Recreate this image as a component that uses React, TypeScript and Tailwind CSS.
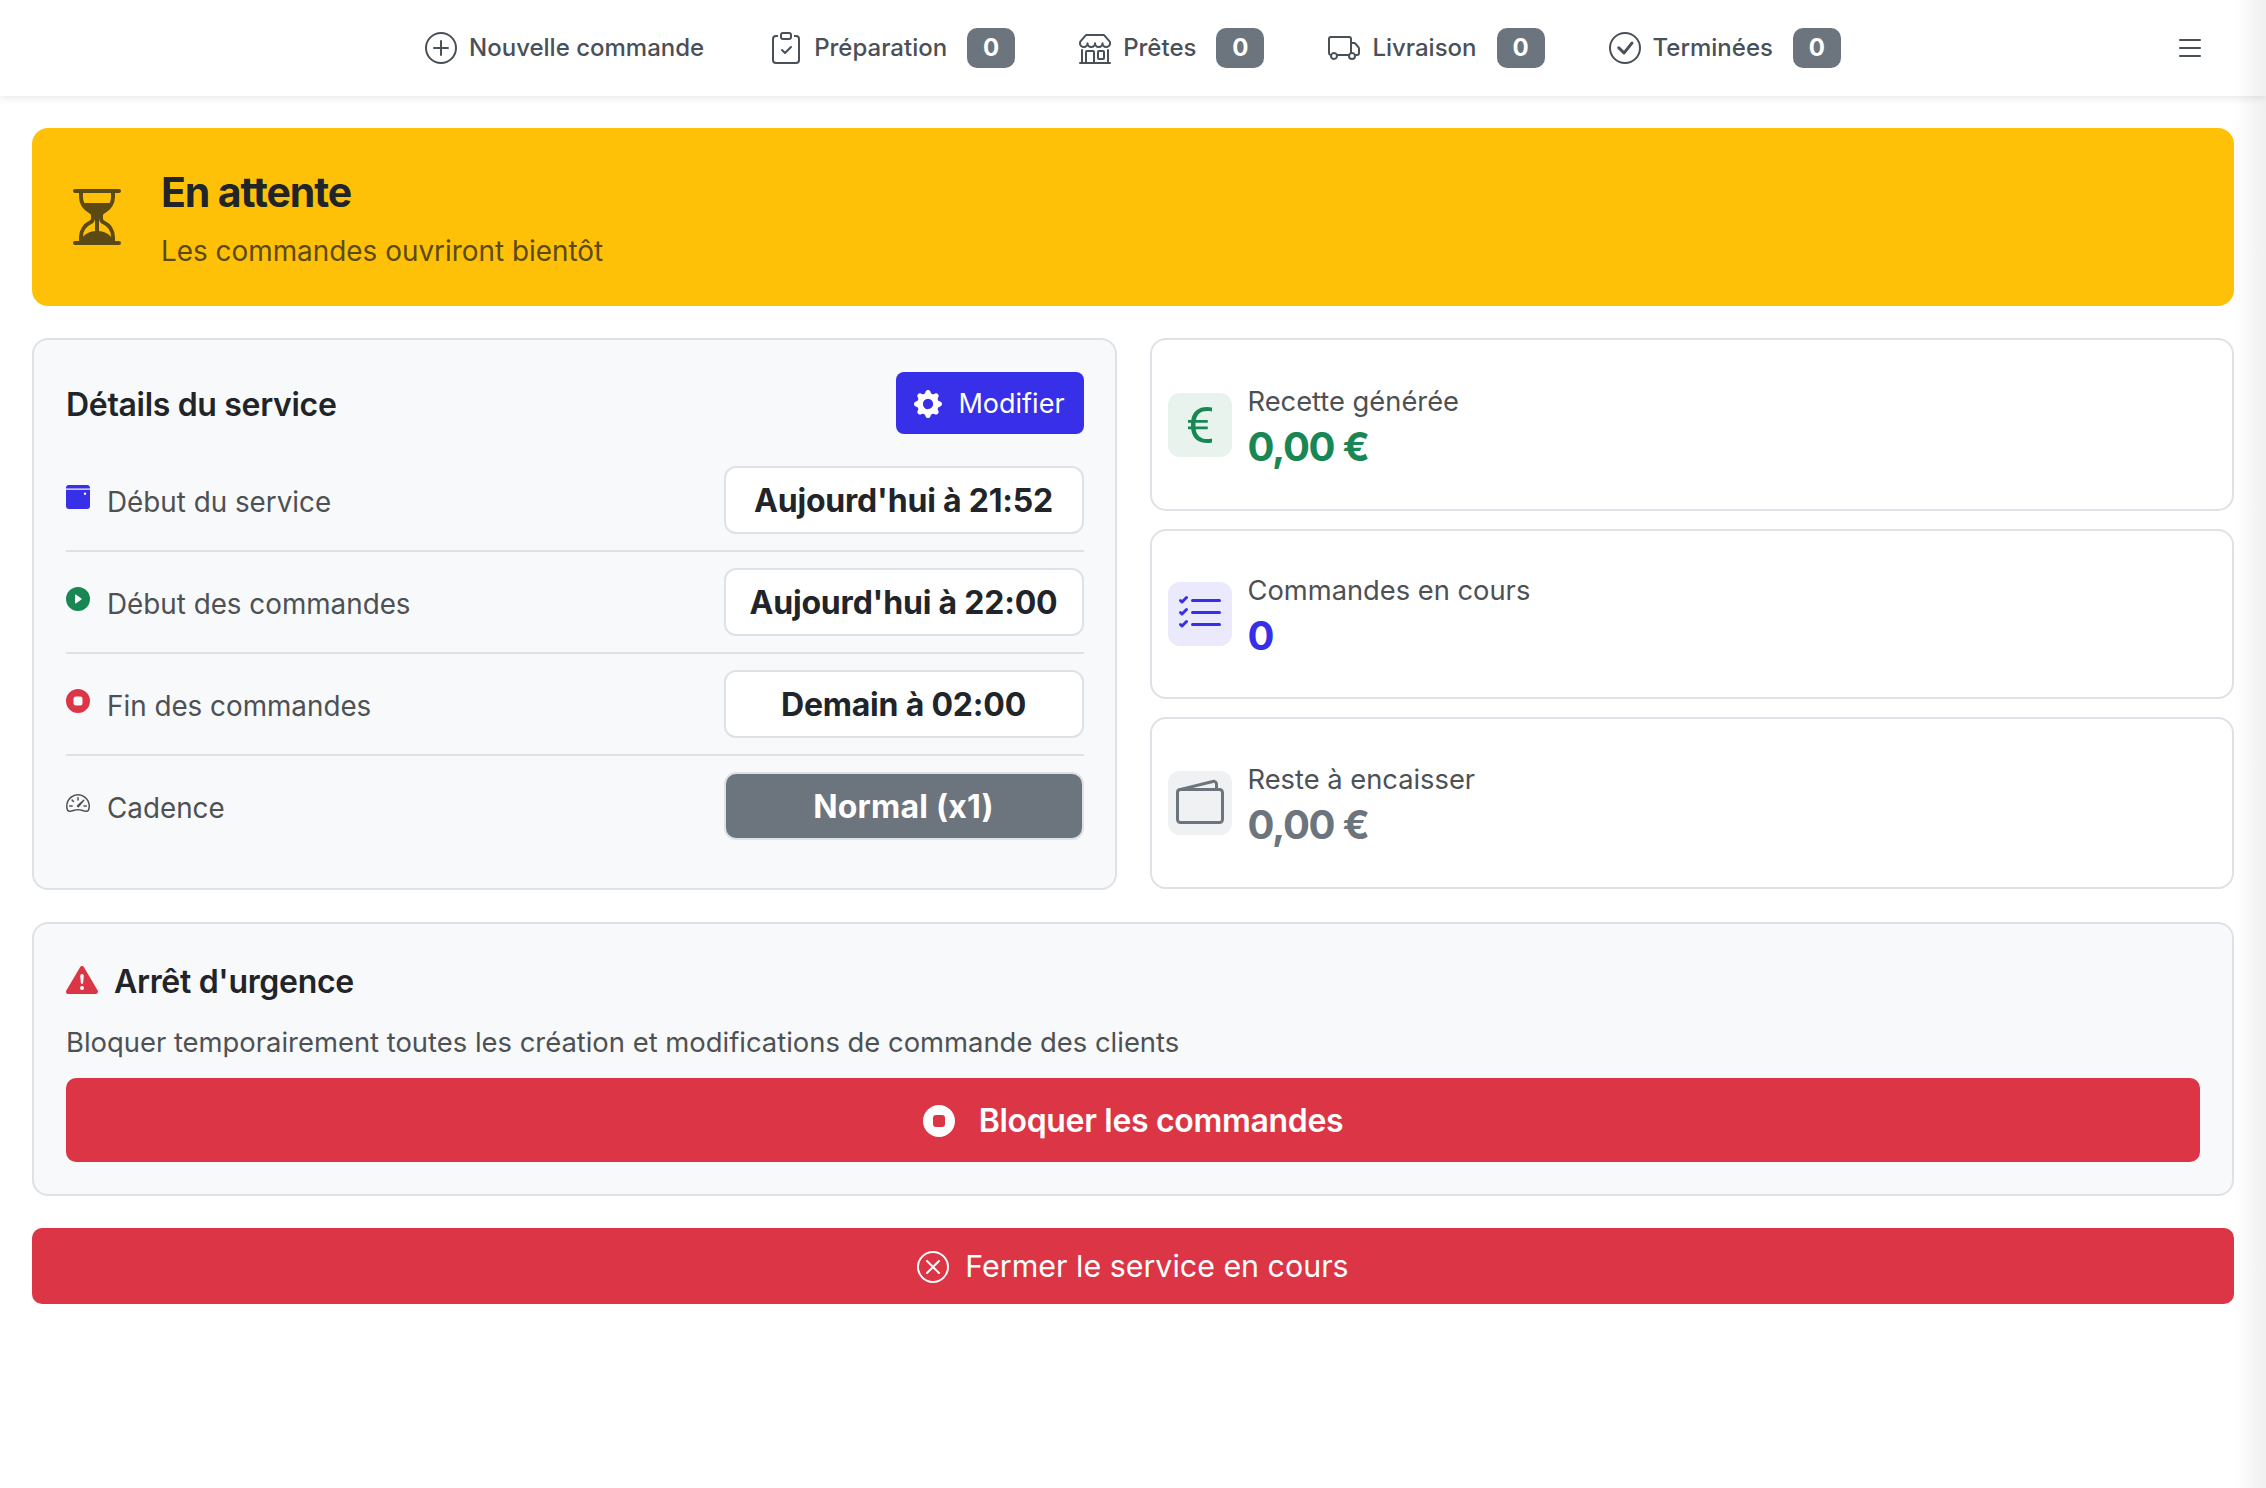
import {
  BsPlusCircle,
  BsClipboardCheck,
  BsShop,
  BsTruck,
  BsCheckCircle,
  BsList,
  BsHourglassSplit,
  BsGearFill,
  BsPlayCircleFill,
  BsStopCircleFill,
  BsSpeedometer2,
  BsCurrencyEuro,
  BsListCheck,
  BsWallet2,
  BsExclamationTriangleFill,
  BsXCircle,
} from "react-icons/bs";

function CalendarIcon({ className }: { className?: string }) {
  return (
    <svg viewBox="0 0 16 16" fill="currentColor" className={className}>
      <path d="M2 0h12a2 2 0 0 1 2 2v.4H0V2a2 2 0 0 1 2-2z" />
      <path
        fillRule="evenodd"
        d="M0 3.2h16V14a2 2 0 0 1-2 2H2a2 2 0 0 1-2-2zM12.7 5a.8.8 0 1 0 0 1.6.8.8 0 0 0 0-1.6z"
      />
    </svg>
  );
}

const navItems = [
  { label: "Préparation", icon: BsClipboardCheck },
  { label: "Prêtes", icon: BsShop },
  { label: "Livraison", icon: BsTruck },
  { label: "Terminées", icon: BsCheckCircle },
];

const rows = [
  { label: "Début du service", value: "Aujourd'hui à 21:52", icon: CalendarIcon, iconClass: "text-[#3730e8]" },
  { label: "Début des commandes", value: "Aujourd'hui à 22:00", icon: BsPlayCircleFill, iconClass: "text-[#198754]" },
  { label: "Fin des commandes", value: "Demain à 02:00", icon: BsStopCircleFill, iconClass: "text-[#dc3545]" },
];

function Row({ label, icon: Icon, iconClass, last, children }: any) {
  return (
    <div className={`flex items-center justify-between py-[16px] ${last ? "" : "border-b-2 border-[#dee2e6]"}`}>
      <div className="flex items-center gap-[17px]">
        <Icon className={`h-[24px] w-[24px] -translate-y-[3px] ${iconClass}`} />
        <span className="pt-[5px] text-[27.8px] text-[#4d5154]">{label}</span>
      </div>
      {children}
    </div>
  );
}

function Stat({ label, value, icon: Icon, tileClass, valueClass, heightClass }: any) {
  return (
    <div className={`flex items-center gap-[16px] rounded-[16px] border-2 border-[#dee2e6] bg-white px-[16px] ${heightClass}`}>
      <div className={`flex h-[64px] w-[64px] items-center justify-center rounded-[12px] ${tileClass}`}>
        <Icon className={`h-[48px] w-[48px] ${valueClass}`} />
      </div>
      <div className="pt-[4px]">
        <div className="text-[27.3px] leading-[40px] text-[#4d5154]">{label}</div>
        <div className={`text-[40px] leading-[50px] font-bold tracking-[-1.3px] ${valueClass}`}>{value}</div>
      </div>
    </div>
  );
}

export default function App() {
  return (
    <div className="relative min-h-[1488px] overflow-hidden bg-white font-['Inter',sans-serif] text-[#212529]">
      {/* Navbar */}
      <nav className="relative flex h-[96px] items-center justify-center gap-[64px] bg-white shadow-[0_2px_8px_rgba(0,0,0,0.1)]">
        <div className="mr-[2px] flex items-center gap-[12px] text-[24px] font-medium text-[#495057]">
          <BsPlusCircle className="h-[32px] w-[32px]" />
          Nouvelle commande
        </div>
        {navItems.map((item) => (
          <div key={item.label} className="flex items-center gap-[12px] text-[24px] font-medium text-[#495057]">
            <item.icon className="h-[32px] w-[32px]" />
            <span className="mr-[8px]">{item.label}</span>
            <span className="flex h-[40px] w-[48px] items-center justify-center rounded-[10px] bg-[#6c757d] text-[24px] font-bold text-white">
              0
            </span>
          </div>
        ))}
        <BsList className="absolute right-[60px] h-[32px] w-[32px] text-[#495057]" />
      </nav>

      <main className="flex flex-col gap-[32px] p-[32px]">
        {/* Status banner */}
        <div className="flex h-[178px] items-center gap-[32px] rounded-[16px] bg-[#ffc107] pr-[32px] pl-[33px]">
          <BsHourglassSplit className="h-[64px] w-[64px] text-[#5c4a14]" />
          <div>
            <div className="pt-[4px] text-[41px] leading-[48px] font-bold tracking-[-1.1px]">En attente</div>
            <div className="mt-[15px] text-[27.9px] leading-[40px] text-[#5c4a14]">Les commandes ouvriront bientôt</div>
          </div>
        </div>

        <div className="grid grid-cols-2 gap-[33px]">
          {/* Service details */}
          <div className="rounded-[16px] border-2 border-[#dee2e6] bg-[#f8f9fa] pt-[32px] pr-[31px] pb-[32px] pl-[32px]">
            <div className="mb-[16px] flex items-center justify-between">
              <h2 className="pt-[3px] text-[32px] font-semibold tracking-[-0.32px]">Détails du service</h2>
              <button className="flex h-[62px] w-[188px] items-center justify-center gap-[16px] rounded-[8px] bg-[#3730e8] pt-[2px] text-[27px] text-white">
                <BsGearFill className="h-[28px] w-[28px]" />
                Modifier
              </button>
            </div>
            {rows.map((row) => (
              <Row key={row.label} label={row.label} icon={row.icon} iconClass={row.iconClass}>
                <div className="flex h-[68px] w-[360px] items-center justify-center rounded-[12px] border-2 border-[#dee2e6] bg-white pt-[2px] text-[32px] font-bold tracking-[-0.2px]">
                  {row.value}
                </div>
              </Row>
            ))}
            <Row label="Cadence" icon={BsSpeedometer2} iconClass="text-[#4d5154]" last>
              <div className="flex h-[68px] w-[360px] items-center justify-center rounded-[12px] border-2 border-[#dee2e6] bg-[#6c757d] pt-[2px] text-[32px] font-bold tracking-[0.2px] text-white">
                Normal (x1)
              </div>
            </Row>
          </div>

          {/* Stats */}
          <div className="flex flex-col gap-[18px]">
            <Stat label="Recette générée" value="0,00 €" icon={BsCurrencyEuro} tileClass="bg-[#e8f3ee]" valueClass="text-[#198754]" heightClass="h-[173px]" />
            <Stat label="Commandes en cours" value="0" icon={BsListCheck} tileClass="bg-[#ebeafd]" valueClass="text-[#3730e8]" heightClass="h-[170px]" />
            <Stat label="Reste à encaisser" value="0,00 €" icon={BsWallet2} tileClass="bg-[#f0f1f2]" valueClass="text-[#6c757d]" heightClass="h-[172px]" />
          </div>
        </div>

        {/* Emergency stop */}
        <div className="rounded-[16px] border-2 border-[#dee2e6] bg-[#f8f9fa] px-[32px] pt-[34px] pb-[32px]">
          <div className="flex items-center gap-[16px]">
            <BsExclamationTriangleFill className="h-[32px] w-[32px] -translate-y-[2px] text-[#dc3545]" />
            <h2 className="text-[32px] font-semibold tracking-[-0.32px]">Arrêt d'urgence</h2>
          </div>
          <p className="mt-[15px] mb-[15px] text-[27.4px] leading-[42px] text-[#4d5154]">
            Bloquer temporairement toutes les création et modifications de commande des clients
          </p>
          <button className="flex h-[84px] w-full items-center justify-center gap-[24px] rounded-[10px] bg-[#dc3545] pt-[2px] text-[32px] font-semibold tracking-[-0.32px] text-white">
            <BsStopCircleFill className="h-[32px] w-[32px]" />
            Bloquer les commandes
          </button>
        </div>

        <button className="flex h-[76px] w-full items-center justify-center gap-[16px] rounded-[10px] bg-[#dc3545] pt-[1px] text-[30.4px] text-white">
          <BsXCircle className="h-[32px] w-[32px]" />
          Fermer le service en cours
        </button>
      </main>

      {/* shadow of the closed side panel */}
      <div className="pointer-events-none absolute top-0 right-0 h-full w-[32px] bg-gradient-to-l from-[rgba(0,0,0,0.06)] to-transparent" />
    </div>
  );
}
